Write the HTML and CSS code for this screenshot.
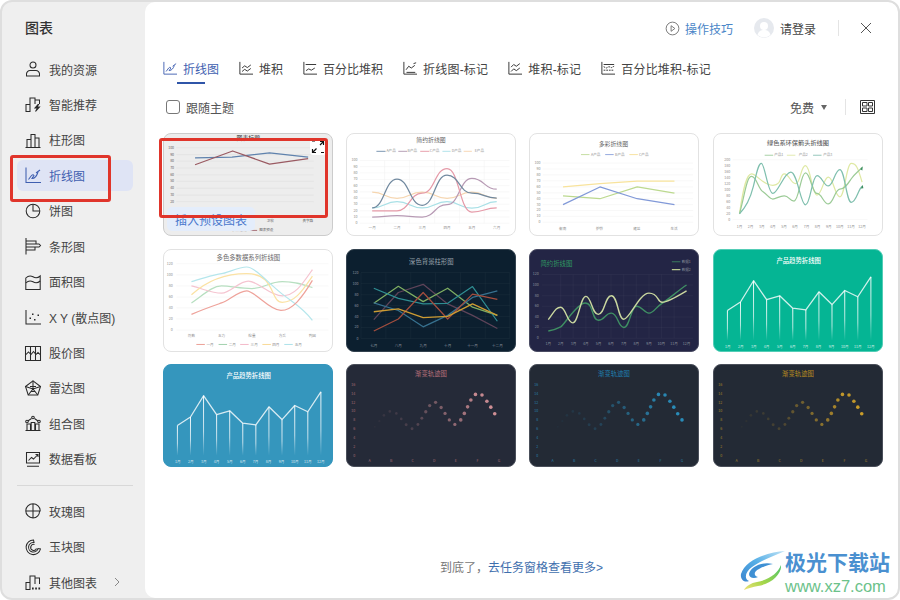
FILE: index.html
```html
<!DOCTYPE html>
<html lang="zh-CN">
<head>
<meta charset="utf-8">
<title>图表</title>
<link rel="stylesheet" href="styles.css">
</head>
<body>
<svg class="defs" aria-hidden="true">
  <defs>
    <linearGradient id="fade" x1="0" y1="0" x2="0" y2="1">
      <stop offset="0" stop-color="#fff" stop-opacity=".95"/>
      <stop offset=".6" stop-color="#fff" stop-opacity=".7"/>
      <stop offset="1" stop-color="#fff" stop-opacity="0"/>
    </linearGradient>
    <linearGradient id="logoBlue" x1="1" y1="0" x2="0" y2="1">
      <stop offset="0" stop-color="#bfe3f6"/>
      <stop offset=".5" stop-color="#55aee6"/>
      <stop offset="1" stop-color="#3c86cf"/>
    </linearGradient>
    <linearGradient id="logoGreen" x1="1" y1="0" x2="0" y2="1">
      <stop offset="0" stop-color="#4cc46a"/>
      <stop offset=".6" stop-color="#a6d64a"/>
      <stop offset="1" stop-color="#f0e27a"/>
    </linearGradient>
    <g id="trend">
      <path class="trend-line" d="M78 558L118 532L158 467L198 525L238 513L278 551L318 556L358 501L398 540L437 497L477 516L517 455"/>
      <rect x="76.500" y="558" width="3" height="92" fill="url(#fade)"/>
      <rect x="116.500" y="532" width="3" height="118" fill="url(#fade)"/>
      <rect x="156.500" y="467" width="3" height="183" fill="url(#fade)"/>
      <rect x="196.500" y="525" width="3" height="125" fill="url(#fade)"/>
      <rect x="236.500" y="513" width="3" height="137" fill="url(#fade)"/>
      <rect x="276.500" y="551" width="3" height="99" fill="url(#fade)"/>
      <rect x="316.500" y="556" width="3" height="94" fill="url(#fade)"/>
      <rect x="356.500" y="501" width="3" height="149" fill="url(#fade)"/>
      <rect x="396.500" y="540" width="3" height="110" fill="url(#fade)"/>
      <rect x="435.500" y="497" width="3" height="153" fill="url(#fade)"/>
      <rect x="475.500" y="516" width="3" height="134" fill="url(#fade)"/>
      <rect x="515.500" y="455" width="3" height="195" fill="url(#fade)"/>
    </g>
    <g id="traj">
      <circle cx="672" cy="562" r="3" opacity=".04"/><circle cx="686" cy="545" r="3.5" opacity=".06"/>
      <circle cx="700" cy="527" r="4" opacity=".1"/><circle cx="718" cy="515" r="4" opacity=".12"/>
      <circle cx="738" cy="521" r="4" opacity=".14"/><circle cx="753" cy="538" r="4" opacity=".16"/>
      <circle cx="768" cy="556" r="4.5" opacity=".18"/><circle cx="786" cy="568" r="4.5" opacity=".2"/>
      <circle cx="804" cy="555" r="4.5" opacity=".24"/><circle cx="816" cy="536" r="4.5" opacity=".28"/>
      <circle cx="828" cy="516" r="5" opacity=".34"/><circle cx="840" cy="497" r="5" opacity=".38"/>
      <circle cx="858" cy="487" r="5" opacity=".42"/><circle cx="875" cy="503" r="5" opacity=".46"/>
      <circle cx="887" cy="521" r="5" opacity=".5"/><circle cx="900" cy="541" r="5" opacity=".52"/>
      <circle cx="917" cy="555" r="5" opacity=".56"/><circle cx="935" cy="541" r="5.5" opacity=".6"/>
      <circle cx="946" cy="521" r="5.5" opacity=".66"/><circle cx="956" cy="501" r="5.5" opacity=".7"/>
      <circle cx="966" cy="480" r="5.5" opacity=".76"/><circle cx="980" cy="463" r="5.5" opacity=".85"/>
      <circle cx="1000" cy="465" r="5.5" opacity=".85"/><circle cx="1015" cy="484" r="5.5" opacity=".85"/>
      <circle cx="1027" cy="502" r="5.5" opacity=".9"/><circle cx="1039" cy="522" r="5.5" opacity=".9"/>
    </g>
    <g id="trajAxis">
      <path class="traj-axis" d="M625 650H1085"/>
    </g>
  </defs>
</svg>

<div class="app">
  <aside class="side">
    <h1 class="side-title">图表</h1>
    <nav class="side-list">
      <a class="side-item"><svg class="ico" viewBox="0 0 16 16"><circle cx="8" cy="4" r="3"/><path d="M1.500 15v-2a3.500 3.500 0 0 1 3.500-3.500h6a3.500 3.500 0 0 1 3.500 3.500v2z"/></svg>我的资源</a>
      <a class="side-item"><svg class="ico" viewBox="0 0 16 16"><path d="M1 15.500V8.500h4v7zM5 8.500V2h5v6M10 4h4.500v4"/><path d="M13 8.500l-3 3.500h2.500l-2 3.500 4-4.500h-2.500l1.500-2.500z"/></svg>智能推荐</a>
      <a class="side-item"><svg class="ico" viewBox="0 0 16 16"><path d="M.5 15.500h15M2 15.500V7.500h4v8M6 15.500V2.500h4v13M10 15.500V6h4v9.500"/></svg>柱形图</a>
      <a class="side-item active"><svg class="ico" viewBox="0 0 16 16"><path d="M1 .5v15h15"/><path d="M3.500 12.500l3-4c1-1 2-1 2.500 0l-2 3c3 0 5-3 6-6.500"/><path d="M11 6l4-3"/></svg>折线图</a>
      <a class="side-item"><svg class="ico" viewBox="0 0 16 16"><circle cx="8" cy="8" r="6.800"/><path d="M8 1.200V8h6.800"/></svg>饼图</a>
      <a class="side-item"><svg class="ico" viewBox="0 0 16 16"><path d="M1 0v16.500M1 3h10v3H1M1 6h13l1.500 1.500L14 9H1M1 9h9v3H1"/></svg>条形图</a>
      <a class="side-item"><svg class="ico" viewBox="0 0 16 16"><path d="M.800 4c3-3 5-2.500 7.200-1.200s4.500 1.500 7.200-.8v13.500H.800z"/><path d="M.800 9c3-3 5-2.500 7.200-1.200s4.500 1.500 7.200-.8"/></svg>面积图</a>
      <a class="side-item"><svg class="ico" viewBox="0 0 16 16"><path d="M1 1v14h15"/><path class="dot" d="M4.500 8.500h1.500v1.500H4.500zM7 4.500h1.500V6H7zM9 10h1.500v1.500H9zM12.500 5.500H14V7h-1.500z"/></svg>X Y (散点图)</a>
      <a class="side-item"><svg class="ico" viewBox="0 0 16 16"><path d="M.500 1.500h15v14H.500zM5.500 1.500v14M10.500 1.500v14M.500 10l3-3 2.500 2.500 2.500-3 2.500 3 2-2 2.500 2.500"/></svg>股价图</a>
      <a class="side-item"><svg class="ico" viewBox="0 0 16 16"><path d="M8 .8l7.500 5.700L12.800 15H3.200L.500 6.500z"/><path d="M.500 6.500L8 9l7.500-2.500M8 .8V9M3.200 15L8 9l4.800 6M5 6.500h6M5.500 11.500h5"/></svg>雷达图</a>
      <a class="side-item"><svg class="ico" viewBox="0 0 16 16"><path d="M.500 15.500h15M2 15.500V9h3.500v6.500M6.200 15.500V7.500h3.600v8M10.500 15.500V9H14v6.500M2.800 6l3.700-2.500M9.500 3.500L13 6"/><circle cx="2" cy="6.500" r="1.300"/><circle cx="8" cy="2.500" r="1.300"/><circle cx="14" cy="6.500" r="1.300"/></svg>组合图</a>
      <a class="side-item"><svg class="ico" viewBox="0 0 16 16"><path d="M1.500 1.500h13v10.500h-13zM2 15.200h12"/><path d="M3.500 9.500l3-3 2 1.500 4-4M10.500 3.500h2.500V6"/></svg>数据看板</a>
    </nav>
    <div class="side-sep"></div>
    <nav class="side-list">
      <a class="side-item"><svg class="ico" viewBox="0 0 16 16"><path d="M8 .8a7.200 7.200 0 0 1 7.200 7.200H.800A7.200 7.200 0 0 1 8 .8zM8 .8v14.700M.800 8c0 3.500 3 6.800 7.200 7a6.500 6.500 0 0 0 6.500-7"/></svg>玫瑰图</a>
      <a class="side-item"><svg class="ico" viewBox="0 0 16 16"><path d="M8.500 1A7.300 7.300 0 1 0 15.500 10l-2.500-.500A4.800 4.800 0 1 1 9 3.500z"/><path d="M9.500 5.500a3 3 0 1 0 2 4"/></svg>玉块图</a>
      <a class="side-item"><svg class="ico" viewBox="0 0 16 16"><path d="M1 15.500V8.500h4v7zM5 8.500V2h5v8M10 4h4.500v6"/><path class="dot" d="M7 13.500h1.700v2H7zM10.200 13.500h1.700v2h-1.700zM13.400 13.500h1.700v2h-1.700z"/></svg>其他图表<svg class="chev" viewBox="0 0 8 10"><path d="M2 1l4 4-4 4"/></svg></a>
    </nav>
  </aside>

  <main class="main">
    <header class="top">
      <a class="tips"><svg class="tips-ico" viewBox="0 0 16 16"><circle cx="8" cy="8" r="6.800"/><path d="M6.500 5l4 3-4 3z"/></svg>操作技巧</a>
      <a class="login"><svg class="avatar" viewBox="0 0 20 20"><circle cx="10" cy="10" r="10" fill="#e6e9ee"/><circle cx="10" cy="8" r="4" fill="#fff"/><path d="M3.500 17c1-4 3.500-5 6.500-5s5.500 1 6.500 5a10 10 0 0 1-13 0z" fill="#fff"/></svg>请登录</a>
      <span class="vline"></span>
      <svg class="close" viewBox="0 0 10 10"><path d="M0 0l10 10M10 0L0 10"/></svg>
    </header>

    <div class="tabs">
      <a class="tab on"><svg class="ico" viewBox="0 0 16 16"><path d="M1 1v14h15"/><path d="M3.500 12l3-4c1-1 2-1 2.500 0l-2 3c3 0 5-3 6-6M11 6l4-3"/></svg>折线图</a>
      <a class="tab"><svg class="ico" viewBox="0 0 16 16"><path d="M1 1v14h15"/><path d="M3.500 8l3-2.500 3 2 4-3M3.500 12l3-2.500 3 2 4-3"/></svg>堆积</a>
      <a class="tab"><svg class="ico" viewBox="0 0 16 16"><path d="M1 1v14h15M3 4h12"/><path d="M3.500 11l3-2 3 1.500 4-2.500"/></svg>百分比堆积</a>
      <a class="tab mk"><svg class="ico" viewBox="0 0 16 16"><path d="M1 1v14h15"/><path d="M3.500 10l3-4 3 2 4-3M4 13h10"/><path d="M12 3l3-1"/></svg>折线图-标记</a>
      <a class="tab mk"><svg class="ico" viewBox="0 0 16 16"><path d="M1 1v14h15"/><path d="M3.500 7l3-3 3 2 4-3M3.500 12l3-3 3 2 4-3"/></svg>堆积-标记</a>
      <a class="tab mk"><svg class="ico" viewBox="0 0 16 16"><path d="M1 1v14h15M3 4h12"/><path stroke-dasharray="2 1" d="M3 6.500l3 1.500 3-1.500 3 1 3-1.500M3 10.500h12"/></svg>百分比堆积-标记</a>
    </div>

    <div class="filter">
      <label class="follow"><span class="box"></span>跟随主题</label>
      <div class="filter-right">
        <span class="free">免费<i class="tri"></i></span>
        <span class="vline"></span>
        <svg class="grid-ico" viewBox="0 0 15 14"><path d="M.500 .500h14v13H.500zM2.500 2.500h4.500v3.500H2.500zM8.500 2.500h4v3.500h-4zM2.500 8h4.500v3.500H2.500zM8.500 8h4v3.500h-4z"/></svg>
      </div>
    </div>

    <section class="cards">
      <article class="card light dim">
        <svg class="chart" viewBox="39 249 510 309">
          <text class="ct" x="295" y="268">图表标题</text>
          <path class="gl" d="M75 291H495M75 312H495M75 332H495M75 353H495M75 374H495M75 394H495M75 415H495M75 436H495M75 456H495"/>
          <text class="yl" x="68" y="294">100</text><text class="yl" x="68" y="315">90</text><text class="yl" x="68" y="335">80</text><text class="yl" x="68" y="356">70</text><text class="yl" x="68" y="377">60</text><text class="yl" x="68" y="397">50</text><text class="yl" x="68" y="418">40</text><text class="yl" x="68" y="439">30</text><text class="yl" x="68" y="459">20</text>
          <path class="s w3" stroke="#5f82ad" d="M132 322L245 320L360 307L478 320"/>
          <path class="s w3" stroke="#9a5a62" d="M132 343L247 301L360 341L478 324"/>
          <text class="al" x="362" y="517">卫宏</text><text class="al" x="477" y="517">贵字路</text>
          <path class="s" stroke="#aaa" d="M213 544H245"/><path class="s" stroke="#9a5a62" d="M296 544H322"/>
          <text class="al" x="268" y="547">预估收视</text><text class="al" x="350" y="547">图表预设</text>
        </svg>
      </article>

      <article class="card light">
        <svg class="chart" viewBox="590 249 510 309">
          <text class="ct" x="845" y="274">简约折线图</text>
          <path class="s" stroke="#5e7ea0" d="M678 302H706"/><text class="al" x="723" y="305">A产品</text>
          <path class="s" stroke="#a58aa6" d="M745 302H772"/><text class="al" x="788" y="305">B产品</text>
          <path class="s" stroke="#e18a9b" d="M812 302H840"/><text class="al" x="856" y="305">C产品</text>
          <path class="s" stroke="#9fdde5" d="M880 302H905"/><text class="al" x="923" y="305">D产品</text>
          <path class="s" stroke="#f5cfa5" d="M945 302H970"/><text class="al" x="993" y="305">E产品</text>
          <path class="gl" d="M627 330H1085M627 349H1085M627 368H1085M627 388H1085M627 407H1085M627 426H1085M627 445H1085M627 464H1085M627 484H1085M627 503H1085M627 522H1085M703 330V522M779 330V522M856 330V522M932 330V522M1008 330V522"/>
          <text class="yl" x="620" y="333">100</text><text class="yl" x="620" y="352">90</text><text class="yl" x="620" y="371">80</text><text class="yl" x="620" y="391">70</text><text class="yl" x="620" y="410">60</text><text class="yl" x="620" y="429">50</text><text class="yl" x="620" y="448">40</text><text class="yl" x="620" y="467">30</text><text class="yl" x="620" y="487">20</text><text class="yl" x="620" y="506">10</text><text class="yl" x="620" y="525">0</text>
          <path class="s w3" stroke="#f6d6b0" d="M665 427C703 427 703 446 741 446S779 427 818 427S856 446 894 446S932 427 970 427S1008 446 1046 446"/>
          <path class="s w3" stroke="#a8e0e6" d="M665 475C703 475 703 456 741 456S779 475 818 475S856 456 894 456S932 476 970 476S1008 456 1046 456"/>
          <path class="s w3" stroke="#b79ab4" d="M665 503C703 503 703 499 741 499S779 503 818 503S856 465 894 465S932 385 970 385S1008 418 1046 418"/>
          <path class="s w3" stroke="#e59aa8" d="M665 484C703 484 703 484 741 484S779 430 818 430S856 355 894 355S932 488 970 488S1008 475 1046 475"/>
          <path class="s w3" stroke="#71899f" d="M665 475C703 475 703 387 741 387S779 467 818 467S856 375 894 375S932 430 970 430S1008 445 1046 445"/>
          <text class="al" x="665" y="541">一月</text><text class="al" x="741" y="541">二月</text><text class="al" x="818" y="541">三月</text><text class="al" x="894" y="541">四月</text><text class="al" x="970" y="541">五月</text><text class="al" x="1046" y="541">六月</text>
        </svg>
      </article>

      <article class="card light">
        <svg class="chart" viewBox="28 398 510 309">
          <text class="ct" x="281" y="435">多彩折线图</text>
          <path class="s" stroke="#b9d78f" d="M182 461H208"/><text class="al" x="227" y="464">A产品</text>
          <path class="s" stroke="#7d95d6" d="M256 461H282"/><text class="al" x="301" y="464">B产品</text>
          <path class="s" stroke="#f5dd8d" d="M330 461H356"/><text class="al" x="374" y="464">C产品</text>
          <path class="gl" d="M65 487H525M65 505H525M65 523H525M65 541H525M65 560H525M65 578H525M65 596H525M65 614H525M65 632H525M65 650H525M65 668H525"/>
          <text class="yl" x="58" y="490">100</text><text class="yl" x="58" y="508">90</text><text class="yl" x="58" y="526">80</text><text class="yl" x="58" y="544">70</text><text class="yl" x="58" y="563">60</text><text class="yl" x="58" y="581">50</text><text class="yl" x="58" y="599">40</text><text class="yl" x="58" y="617">30</text><text class="yl" x="58" y="635">20</text><text class="yl" x="58" y="653">10</text><text class="yl" x="58" y="671">0</text>
          <path class="s w3" stroke="#bcd98f" d="M127 587L240 596L354 560L468 579"/>
          <path class="s w3" stroke="#8199d8" d="M127 614L240 560L354 596L468 614"/>
          <path class="s w3" stroke="#f8e39c" d="M127 560L240 550L354 542L468 542"/>
          <text class="al" x="126" y="692">衡南</text><text class="al" x="239" y="692">炉铁</text><text class="al" x="353" y="692">雍益</text><text class="al" x="467" y="692">生活</text>
        </svg>
      </article>

      <article class="card light">
        <svg class="chart" viewBox="577 398 510 309">
          <text class="ct bold" x="832" y="432">绿色系环保箭头折线图</text>
          <path class="s" stroke="#94c793" d="M730 463H756"/><text class="al" x="773" y="466">产品1</text>
          <path class="s" stroke="#dbe6a0" d="M798 463H824"/><text class="al" x="848" y="466">产品2</text>
          <path class="s" stroke="#7fbcae" d="M878 463H904"/><text class="al" x="923" y="466">产品3</text>
          <path class="gl" d="M632 477H1045M632 660H1045"/>
          <text class="yl" x="625" y="480">200</text><text class="yl" x="625" y="498">180</text><text class="yl" x="625" y="517">160</text><text class="yl" x="625" y="535">140</text><text class="yl" x="625" y="553">120</text><text class="yl" x="625" y="572">100</text><text class="yl" x="625" y="590">80</text><text class="yl" x="625" y="608">60</text><text class="yl" x="625" y="627">40</text><text class="yl" x="625" y="645">20</text><text class="yl" x="625" y="663">0</text>
          <path class="s w3" stroke="#dfe9a4" d="M653 642C665 560 675 520 690 520S725 555 755 555S775 520 790 520S810 550 825 550S840 495 855 495S875 585 890 585S910 530 925 530S945 590 960 590S980 488 995 488S1015 500 1028 545"/>
          <path class="s w3" stroke="#9ccb97" d="M653 642C670 580 675 528 690 528S710 565 725 575S745 597 755 597S775 587 790 587S805 603 820 603S840 517 855 517S875 580 890 580S910 612 925 612S945 567 960 567S985 550 995 535S1015 515 1028 500"/>
          <path class="s w3" stroke="#7fbfae" d="M653 642C670 625 685 600 695 560S710 488 720 488S740 580 755 580S790 515 810 515S840 615 855 615S875 525 890 525S910 557 925 557S945 507 960 507S980 607 995 607S1015 570 1028 558"/>
          <path fill="#3f8f63" d="M1022 506L1030 497L1029 510zM1024 565L1030 553L1032 564z"/>
          <text class="al" x="653" y="685">1月</text><text class="al" x="687" y="685">2月</text><text class="al" x="721" y="685">3月</text><text class="al" x="755" y="685">4月</text><text class="al" x="789" y="685">5月</text><text class="al" x="823" y="685">6月</text><text class="al" x="858" y="685">7月</text><text class="al" x="892" y="685">8月</text><text class="al" x="926" y="685">9月</text><text class="al" x="960" y="685">10月</text><text class="al" x="994" y="685">11月</text><text class="al" x="1028" y="685">12月</text>
        </svg>
      </article>

      <article class="card light">
        <svg class="chart" viewBox="39 25 510 309">
          <text class="ct big" x="295" y="55">多色多数据系列折线图</text>
          <path class="gl" d="M75 67H540M75 101H540M75 135H540M75 169H540M75 202H540M75 236H540M75 270H540"/>
          <text class="yl" x="64" y="70">120</text><text class="yl" x="64" y="104">100</text><text class="yl" x="64" y="138">80</text><text class="yl" x="64" y="172">60</text><text class="yl" x="64" y="205">40</text><text class="yl" x="64" y="239">20</text><text class="yl" x="64" y="273">0</text>
          <path class="s w3" stroke="#b7dfc0" d="M121 187C160 160 185 135 213 135S270 143 306 143S360 122 399 122S460 130 491 140"/>
          <path class="s w3" stroke="#f5c4d0" d="M121 135C160 145 185 157 213 157S265 120 295 120S360 165 399 165S460 130 491 85"/>
          <path class="s w3" stroke="#fbe2a4" d="M121 162C150 135 200 97 290 97S360 185 399 185S460 150 491 105"/>
          <path class="s w3" stroke="#b5e6ec" d="M121 122C160 110 200 97 213 97S265 77 290 77S360 130 399 160S460 200 491 240"/>
          <path class="s w3" stroke="#eea29a" d="M121 222C160 205 190 195 213 187S265 150 290 150S360 210 395 210S460 170 491 118"/>
          <text class="al" x="121" y="292">剂数</text><text class="al" x="213" y="292">五力</text><text class="al" x="306" y="292">检量</text><text class="al" x="399" y="292">方兵</text><text class="al" x="491" y="292">判因</text>
          <path class="s" stroke="#e88a80" d="M136 314H162"/><text class="al" x="178" y="319">一月</text>
          <path class="s" stroke="#8dc79c" d="M204 314H230"/><text class="al" x="246" y="319">二月</text>
          <path class="s" stroke="#f2a9bd" d="M270 314H296"/><text class="al" x="313" y="319">三月</text>
          <path class="s" stroke="#f8d27f" d="M338 314H364"/><text class="al" x="379" y="319">四月</text>
          <path class="s" stroke="#9adce6" d="M405 314H431"/><text class="al" x="448" y="319">五月</text>
        </svg>
      </article>

      <article class="card dark navy">
        <svg class="chart" viewBox="589 25 510 309">
          <text class="ct big" x="845" y="67">深色背景柱形图</text>
          <path class="gld" d="M630 94H1085M630 128H1085M630 162H1085M630 195H1085M630 229H1085M630 262H1085M630 296H1085M630 94V296M706 94V296M782 94V296M858 94V296M934 94V296M1010 94V296M1085 94V296"/>
          <text class="yl" x="622" y="97">120</text><text class="yl" x="622" y="131">100</text><text class="yl" x="622" y="165">80</text><text class="yl" x="622" y="198">60</text><text class="yl" x="622" y="232">40</text><text class="yl" x="622" y="265">20</text><text class="yl" x="622" y="299">0</text>
          <path class="s w3" stroke="#5f4459" d="M669 238L744 155L820 130L895 190L971 225L1047 265"/>
          <path class="s w3" stroke="#7fae62" d="M669 188L744 136L820 183L895 142L971 200L1047 225"/>
          <path class="s w3" stroke="#2f8d92" d="M669 142L744 173L820 190L895 188L971 137L1047 243"/>
          <path class="s w3" stroke="#37718f" d="M669 187L744 210L820 260L895 225L971 170L1047 150"/>
          <path class="s w3" stroke="#a44e3e" d="M669 273L744 236L820 155L895 236L971 160L1047 176"/>
          <path class="s w4" stroke="#cc9b33" d="M669 214L744 205L820 232L895 228L971 190L1047 225"/>
          <text class="al" x="669" y="321">七月</text><text class="al" x="744" y="321">八月</text><text class="al" x="820" y="321">九月</text><text class="al" x="895" y="321">十月</text><text class="al" x="971" y="321">十一月</text><text class="al" x="1047" y="321">十二月</text>
        </svg>
      </article>

      <article class="card dark indigo">
        <svg class="chart" viewBox="28 25 510 309">
          <text class="ct big left" x="58" y="74">简约折线图</text>
          <path class="s" stroke="#3f8f63" d="M460 61H486"/><text class="al" x="504" y="64">数据1</text>
          <path class="s w3" stroke="#b9c98f" d="M460 85H486"/><text class="al" x="504" y="88">数据2</text>
          <path class="gld" d="M62 100H525M62 132H525M62 165H525M62 197H525M62 230H525M62 262H525M62 295H525M120 100V295M158 100V295M197 100V295M235 100V295M274 100V295M313 100V295M351 100V295M390 100V295M428 100V295M467 100V295"/>
          <text class="yl" x="53" y="103">120</text><text class="yl" x="53" y="135">100</text><text class="yl" x="53" y="168">80</text><text class="yl" x="53" y="200">60</text><text class="yl" x="53" y="233">40</text><text class="yl" x="53" y="265">20</text><text class="yl" x="53" y="298">0</text>
          <path class="s w4" stroke="#3f8f63" d="M82 273C100 270 110 265 120 260S170 187 195 187S215 240 235 240S255 218 275 218S295 262 313 262S335 197 352 197S375 218 390 218S410 200 430 188S480 148 505 132"/>
          <path class="s w4" stroke="#c9d79f" d="M82 238C100 215 105 200 120 200S140 248 157 248S180 167 197 167S215 222 235 222S255 165 275 165S295 237 313 237S360 157 390 157S415 185 430 185S480 165 505 150"/>
          <text class="al" x="82" y="317">1月</text><text class="al" x="120" y="317">2月</text><text class="al" x="159" y="317">3月</text><text class="al" x="197" y="317">4月</text><text class="al" x="236" y="317">5月</text><text class="al" x="274" y="317">6月</text><text class="al" x="313" y="317">7月</text><text class="al" x="351" y="317">8月</text><text class="al" x="390" y="317">9月</text><text class="al" x="428" y="317">10月</text><text class="al" x="467" y="317">11月</text><text class="al" x="505" y="317">12月</text>
        </svg>
      </article>

      <article class="card solid teal">
        <svg class="chart" viewBox="39 373 510 309">
          <text class="ct big" x="296" y="412">产品趋势折线图</text>
          <use href="#trend"/>
          <text class="al" x="79" y="672">1月</text><text class="al" x="119" y="672">2月</text><text class="al" x="159" y="672">3月</text><text class="al" x="198" y="672">4月</text><text class="al" x="238" y="672">5月</text><text class="al" x="278" y="672">6月</text><text class="al" x="317" y="672">7月</text><text class="al" x="357" y="672">8月</text><text class="al" x="397" y="672">9月</text><text class="al" x="437" y="672">10月</text><text class="al" x="477" y="672">11月</text><text class="al" x="517" y="672">12月</text>
        </svg>
      </article>

      <article class="card solid ocean">
        <svg class="chart" viewBox="39 373 510 309">
          <text class="ct big" x="296" y="412">产品趋势折线图</text>
          <use href="#trend"/>
          <text class="al" x="79" y="672">1月</text><text class="al" x="119" y="672">2月</text><text class="al" x="159" y="672">3月</text><text class="al" x="198" y="672">4月</text><text class="al" x="238" y="672">5月</text><text class="al" x="278" y="672">6月</text><text class="al" x="317" y="672">7月</text><text class="al" x="357" y="672">8月</text><text class="al" x="397" y="672">9月</text><text class="al" x="437" y="672">10月</text><text class="al" x="477" y="672">11月</text><text class="al" x="517" y="672">12月</text>
        </svg>
      </article>

      <article class="card dark slate rose">
        <svg class="chart" viewBox="589 373 510 309">
          <text class="ct big" x="844" y="406">渐变轨迹图</text>
          <use href="#trajAxis"/><use href="#traj"/>
          <text class="yl" x="612" y="437">16</text><text class="yl" x="612" y="464">14</text><text class="yl" x="612" y="491">12</text><text class="yl" x="612" y="518">10</text><text class="yl" x="612" y="545">8</text><text class="yl" x="612" y="572">6</text><text class="yl" x="612" y="599">4</text><text class="yl" x="612" y="626">2</text><text class="yl" x="612" y="653">0</text>
          <text class="al" x="656" y="671">A</text><text class="al" x="722" y="671">B</text><text class="al" x="788" y="671">C</text><text class="al" x="854" y="671">D</text><text class="al" x="920" y="671">E</text><text class="al" x="986" y="671">F</text><text class="al" x="1052" y="671">G</text>
        </svg>
      </article>

      <article class="card dark slate sky">
        <svg class="chart" viewBox="589 373 510 309">
          <text class="ct big" x="844" y="406">渐变轨迹图</text>
          <use href="#trajAxis"/><use href="#traj"/><circle cx="1052" cy="541" r="5.500" class="last"/>
          <text class="yl" x="612" y="437">16</text><text class="yl" x="612" y="464">14</text><text class="yl" x="612" y="491">12</text><text class="yl" x="612" y="518">10</text><text class="yl" x="612" y="545">8</text><text class="yl" x="612" y="572">6</text><text class="yl" x="612" y="599">4</text><text class="yl" x="612" y="626">2</text><text class="yl" x="612" y="653">0</text>
          <text class="al" x="656" y="671">A</text><text class="al" x="722" y="671">B</text><text class="al" x="788" y="671">C</text><text class="al" x="854" y="671">D</text><text class="al" x="920" y="671">E</text><text class="al" x="986" y="671">F</text><text class="al" x="1052" y="671">G</text>
        </svg>
      </article>

      <article class="card dark slate gold">
        <svg class="chart" viewBox="589 373 510 309">
          <text class="ct big" x="844" y="406">渐变轨迹图</text>
          <use href="#trajAxis"/><use href="#traj"/>
          <text class="yl" x="612" y="437">16</text><text class="yl" x="612" y="464">14</text><text class="yl" x="612" y="491">12</text><text class="yl" x="612" y="518">10</text><text class="yl" x="612" y="545">8</text><text class="yl" x="612" y="572">6</text><text class="yl" x="612" y="599">4</text><text class="yl" x="612" y="626">2</text><text class="yl" x="612" y="653">0</text>
          <text class="al" x="656" y="671">A</text><text class="al" x="722" y="671">B</text><text class="al" x="788" y="671">C</text><text class="al" x="854" y="671">D</text><text class="al" x="920" y="671">E</text><text class="al" x="986" y="671">F</text><text class="al" x="1052" y="671">G</text>
        </svg>
      </article>
    </section>

    <footer class="foot">到底了，<a class="foot-link">去任务窗格查看更多&gt;</a></footer>
  </main>

  <button class="insert">插入预设图表</button>
  <span class="expand"><svg viewBox="0 0 14 14"><path d="M9 1.500h3.500V5M12.500 1.500L9 5M5 12.500H1.500V9M1.500 12.500L5.500 8.500"/><path d="M1 1h3M10 12.500h3"/></svg></span>
  <div class="mark mark-nav"></div>
  <div class="mark mark-card"></div>
  <div class="wm">
    <svg class="wm-logo" viewBox="0 0 45 40">
      <path fill="url(#logoBlue)" d="M45 1C28 2 5 10 1 24c-1 6 4 9 8 7-5-2-4-9 3-14C20 11 33 6 45 1z"/>
      <path fill="#3f90d4" d="M33 14C22 11 10 17 9 24c0 4 5 5 9 3-5-1-4-6 1-8 5-3 10-4 14-5z"/>
      <path fill="url(#logoGreen)" d="M41 15c1 9-10 19-23 21-5 1-10 2-14 4 2-4 7-7 13-8 12-2 21-9 24-17z"/>
    </svg>
    <div class="wm-text">
      <span class="wm-cn">极光下载站</span>
      <span class="wm-en">www.xz7.com</span>
    </div>
  </div>
</div>
</body>
</html>
```

FILE: styles.css
```css
* { box-sizing: border-box; }
html, body { margin: 0; height: 100%; background: #fff; }
body { font-family: "Liberation Sans", "Noto Sans CJK SC", sans-serif; font-size: 12px; color: #444; overflow: hidden; }
.defs { position: absolute; width: 0; height: 0; }

.app { position: relative; display: flex; width: 900px; height: 600px; background: #efefef; border: 2px solid #dedede; border-radius: 12px; overflow: hidden; }

/* sidebar */
.side { flex: 0 0 143px; display: flex; flex-direction: column; padding: 0 12px 0 15px; }
.side-title { margin: 12px 0 0 8px; height: 28px; line-height: 28px; font-size: 14px; font-weight: 500; color: #333; }
.side-list { display: flex; flex-direction: column; gap: 4.45px; }
.side-title + .side-list { margin-top: 11.5px; }
.side-item { display: flex; align-items: center; gap: 8px; height: 31px; padding-left: 8px; border-radius: 6px; font-size: 12px; color: #444; }
.side-item.active { background: #dfe4f5; color: #3f5fb0; }
.side-sep { height: 1px; margin: 10.2px 0; background: #d8d8d8; }
.ico { flex: 0 0 16px; width: 16px; height: 16px; fill: none; stroke: #2a2a2a; stroke-width: 1.050; overflow: visible; }
.active .ico, .tab.on .ico { stroke: #3f5fb0; }
.ico .dot { fill: #2a2a2a; stroke: none; }
.chev { flex: 0 0 8px; width: 8px; height: 10px; margin-left: 8px; fill: none; stroke: #888; stroke-width: 1; }

/* main */
.main { flex: 1; display: flex; flex-direction: column; min-width: 0; padding-left: 18px; background: #fff; border-radius: 10px; }
.top { display: flex; align-items: center; height: 52px; padding-right: 27px; justify-content: flex-end; }
.tips { display: flex; align-items: center; gap: 5px; color: #4a86c8; }
.tips-ico { width: 15px; height: 15px; fill: none; stroke: #666; stroke-width: .9; }
.login { display: flex; align-items: center; gap: 6px; margin-left: 21px; color: #444; }
.avatar { width: 20px; height: 20px; }
.vline { display: block; width: 1px; height: 16px; background: #e4e4e4; }
.top .vline { margin: 0 22px 0 22px; }
.close { width: 10px; height: 10px; fill: none; stroke: #555; stroke-width: 1; }

.tabs { display: flex; gap: 20px; height: 28px; }
.tab { position: relative; display: flex; align-items: center; gap: 6px; color: #444; white-space: nowrap; }
.tab .ico { width: 14px; height: 14px; flex-basis: 14px; }
.tab.mk { letter-spacing: .2px; }
.tab.on { color: #3f5fb0; }
.tab.on::after { content: ""; position: absolute; left: 50%; bottom: -2px; width: 28px; height: 2px; margin-left: -14px; background: #2f55a8; }

.filter { display: flex; align-items: center; justify-content: space-between; height: 30px; margin: 10px 0 11px; padding: 0 23px 0 3px; }
.follow { display: flex; align-items: center; gap: 6px; color: #555; }
.box { width: 14px; height: 14px; border: 1px solid #777; border-radius: 3px; background: #fff; }
.filter-right { display: flex; align-items: center; }
.free { display: flex; align-items: center; gap: 7px; color: #555; }
.tri { width: 0; height: 0; border: 3.5px solid transparent; border-top: 5px solid #666; border-bottom: 0; }
.filter-right .vline { margin: 0 14px 0 18px; }
.grid-ico { width: 15px; height: 14px; fill: none; stroke: #333; stroke-width: 1; }

/* cards */
.cards { display: grid; grid-template-columns: repeat(4, 170px); grid-auto-rows: 103px; column-gap: 13.2px; row-gap: 12.5px; }
.card { border: 1px solid #e2e2e2; border-radius: 8px; overflow: hidden; background: #fff; }
.chart { display: block; width: 100%; height: 100%; }
.chart text { text-anchor: middle; font-family: "Noto Sans CJK SC", "Liberation Sans", sans-serif; }
.ct { font-size: 18px; fill: #666; }
.ct.big { font-size: 19.500px; }
.ct.bold { font-size: 19px; font-weight: 500; }
.chart text.left { text-anchor: start; }
.chart .yl { text-anchor: end; font-size: 11px; fill: #8f8f8f; }
.al { font-size: 11px; fill: #8f8f8f; }
.s { fill: none; stroke-width: 2.500; stroke-linejoin: round; }
.w3 { stroke-width: 3.800; }
.w4 { stroke-width: 4.300; }
.gl { fill: none; stroke: #f1f1f1; stroke-width: 1.500; }
.gld { fill: none; stroke: rgba(255,255,255,.08); stroke-width: 1.500; }
.dim { background: #ededed; border-color: #ccc; }
.dim .gl { stroke: #dcdcdc; }
.dim .ct { fill: #333; }
.dim .yl, .dim .al { fill: #666; }
.dark { border-color: #4a4f5a; }
.dark .ct { fill: #9aa3ad; }
.dark .yl, .dark .al { fill: #8a929c; }
.navy { background: #0c1f2f; border-color: #33424f; }
.indigo { background: #232545; border-color: #4a4c63; }
.chart .indigo-title { fill: #2f9a62; }
.indigo .ct { fill: #2f9a62; }
.solid { border-color: transparent; }
.solid .ct { fill: #fff; font-weight: 500; }
.solid .al { fill: rgba(255,255,255,.8); }
.trend-line { fill: none; stroke: #fff; stroke-opacity: .8; stroke-width: 4; stroke-linejoin: round; }
.teal { background: #05b594; border-color: #53cdb6; }
.ocean { background: #3596bd; border-color: #3596bd; }
.slate { background: #232a35; color: #d98a92; }
.slate .traj-axis { fill: none; stroke: #7f868f; stroke-width: 2; }
.slate use { fill: currentColor; }
.slate .last { fill: currentColor; opacity: .9; }
.rose { background: #252a38; color: #e39aa0; }
.rose .ct { fill: #b8707a; }
.rose .yl, .rose .al { fill: #a56b74; }
.sky { color: #2a97c8; }
.sky .ct { fill: #1f7fb0; }
.sky .yl, .sky .al { fill: #2a7fa8; }
.gold { color: #dca928; }
.gold .ct { fill: #b98c1f; }
.gold .yl, .gold .al { fill: #a5842c; }

.foot { margin-top: auto; height: 20px; line-height: 20px; margin-bottom: 20px; padding-left: 277px; color: #777; }
.foot-link { color: #3f6fae; }

/* overlays */
.insert { position: absolute; left: 165px; top: 205px; width: 88px; height: 24px; padding: 0; border: 0; border-radius: 5px; background: #e4edfb; color: #4a78cc; font: 12px "Noto Sans CJK SC", sans-serif; }
.expand { position: absolute; left: 308px; top: 137px; width: 16px; height: 16px; display: flex; align-items: center; justify-content: center; background: #fff; border-radius: 3px; }
.expand svg { width: 14px; height: 14px; fill: none; stroke: #111; stroke-width: 1.200; }
.mark { position: absolute; border: 3px solid #e0352b; border-radius: 3px; pointer-events: none; }
.mark-nav { left: 8px; top: 153px; width: 101px; height: 47px; }
.mark-card { left: 157px; top: 136px; width: 169px; height: 80px; }
.wm { position: absolute; left: 738px; top: 548px; display: flex; }
.wm-logo { width: 45px; height: 40px; }
.wm-text { display: flex; flex-direction: column; align-items: flex-start; margin-top: -1px; }
.wm-cn { font-family: "Noto Sans CJK SC", sans-serif; font-size: 21px; line-height: 24px; font-weight: 700; color: #4a90d0; }
.wm-en { font-family: "Liberation Sans", sans-serif; font-size: 16.500px; line-height: 26px; color: #6cc28a; }
```
